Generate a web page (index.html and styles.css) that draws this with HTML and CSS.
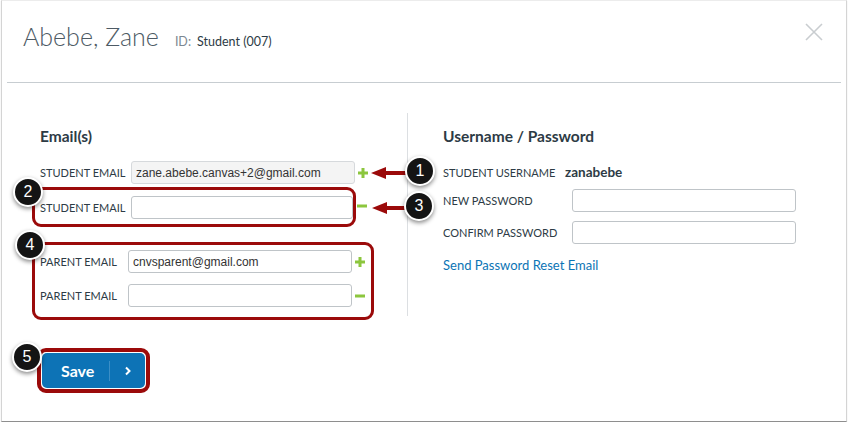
FILE: index.html
```html
<!DOCTYPE html>
<html lang="en">
<head>
    <meta charset="UTF-8">
    <title>Abebe, Zane - Edit Student</title>
    <link rel="stylesheet" href="styles.css">
</head>
<body>
    <div class="dialog">
        <div class="dialog-header">
            <div class="title-group">
                <h1 class="title">Abebe, Zane</h1>
                <span class="id-label">ID:</span>
                <span class="id-value">Student (007)</span>
            </div>
            <svg class="close" width="18" height="18" viewBox="0 0 18 18">
                <path d="M1 1 L17 17 M17 1 L1 17" stroke="#c9cdd0" stroke-width="1.6" fill="none"/>
            </svg>
        </div>

        <div class="dialog-body">
            <div class="col col-left">
                <h2 class="section-title">Email(s)</h2>

                <div class="field-row first-row">
                    <label class="field-label">STUDENT EMAIL</label>
                    <input class="text-input readonly" type="text" value="zane.abebe.canvas+2@gmail.com" readonly>
                    <svg class="icon" width="10" height="10" viewBox="0 0 10 10"><path d="M3.5 0h3v3.5H10v3H6.5V10h-3V6.5H0v-3h3.5z" fill="#8cc63e"/></svg>
                </div>

                <div class="field-row">
                    <div class="mark-box student-box">
                        <label class="field-label">STUDENT EMAIL</label>
                        <input class="text-input wide" type="text">
                    </div>
                    <svg class="icon minus" width="10" height="10" viewBox="0 0 10 10"><rect x="0" y="3.5" width="10" height="3" fill="#8cc63e"/></svg>
                </div>

                <div class="mark-box parent-box">
                    <div class="field-row">
                        <label class="field-label short">PARENT EMAIL</label>
                        <input class="text-input" type="text" value="cnvsparent@gmail.com">
                        <svg class="icon" width="10" height="10" viewBox="0 0 10 10"><path d="M3.5 0h3v3.5H10v3H6.5V10h-3V6.5H0v-3h3.5z" fill="#8cc63e"/></svg>
                    </div>
                    <div class="field-row">
                        <label class="field-label short">PARENT EMAIL</label>
                        <input class="text-input" type="text">
                        <svg class="icon" width="10" height="10" viewBox="0 0 10 10"><rect x="0" y="3.5" width="10" height="3" fill="#8cc63e"/></svg>
                    </div>
                </div>
            </div>

            <div class="col col-right">
                <h2 class="section-title">Username / Password</h2>
                <div class="field-row username-row">
                    <span class="field-label user-label">STUDENT USERNAME</span>
                    <span class="username">zanabebe</span>
                </div>
                <div class="field-row pass-row">
                    <label class="field-label pass-label">NEW PASSWORD</label>
                    <input class="text-input" type="password">
                </div>
                <div class="field-row pass-row confirm-row">
                    <label class="field-label pass-label">CONFIRM PASSWORD</label>
                    <input class="text-input" type="password">
                </div>
                <a href="#" class="reset-link">Send Password Reset Email</a>
            </div>
        </div>

        <div class="dialog-footer">
            <div class="mark-box save-box">
                <button class="save-button">
                    <span class="save-text">Save</span>
                    <span class="save-divider"></span>
                    <svg width="8" height="10" viewBox="0 0 8 10"><path d="M2 1.5 L5.5 5 L2 8.5" stroke="#fff" stroke-width="2" fill="none"/></svg>
                </button>
            </div>
        </div>

        <!-- callouts -->
        <svg class="arrow arrow-1" width="37" height="14" viewBox="0 0 37 14"><path d="M0 7 L15 1 L15 5 L37 5 L37 9 L15 9 L15 13 Z" fill="#9b0a0a"/></svg>
        <svg class="arrow arrow-3" width="37" height="14" viewBox="0 0 37 14"><path d="M0 7 L15 1 L15 5 L37 5 L37 9 L15 9 L15 13 Z" fill="#9b0a0a"/></svg>
        <span class="callout c1">1</span>
        <span class="callout c2">2</span>
        <span class="callout c3">3</span>
        <span class="callout c4">4</span>
        <span class="callout c5">5</span>
    </div>
</body>
</html>
```

FILE: styles.css
```css
body {
    margin: 0;
    background: #fff;
    font-family: Lato, "Open Sans", Arial, sans-serif;
    color: #2d3b45;
}
.dialog {
    position: relative;
    width: 844px;
    height: 420px;
    margin-left: 1px;
    border: 1px solid #d4d4d4;
    border-top-color: #ececec;
    border-bottom-color: #8e8e8e;
    box-shadow: 0 1px 1px rgba(0,0,0,0.15);
}
.dialog-header {
    height: 81px;
    margin: 0 5px;
    border-bottom: 1px solid #c7cdd1;
    display: flex;
    justify-content: space-between;
    align-items: flex-start;
}
.title-group {
    display: flex;
    align-items: baseline;
    padding: 20px 0 0 16px;
}
.title {
    margin: 0;
    font-size: 25px;
    line-height: 30px;
    font-weight: 300;
    color: #4d5a64;
}
.id-label {
    margin-left: 16px;
    font-size: 12.5px;
    color: #7b8791;
}
.id-value {
    margin-left: 6px;
    font-size: 12.5px;
    color: #2d3b45;
}
.close {
    margin: 22px 18px 0 0;
}
.dialog-body {
    display: flex;
    padding-top: 30px;
}
.col-left {
    width: 367px;
    padding-left: 38px;
}
.col-right {
    height: 203px;
    padding-left: 35px;
    border-left: 1px solid #dcdfe2;
}
.section-title {
    margin: 13px 0 0;
    font-size: 15.5px;
    line-height: 20px;
    font-weight: 700;
}
.field-row {
    display: flex;
    align-items: center;
}
.first-row {
    margin-top: 15px;
}
.field-label {
    width: 91px;
    flex-shrink: 0;
    font-size: 11px;
    line-height: 23px;
}
.field-label.short {
    width: 88px;
}
.text-input {
    box-sizing: border-box;
    width: 224px;
    height: 23px;
    margin: 0;
    padding: 0 4px;
    border: 1px solid #bfc4c8;
    border-radius: 3px;
    background: #fff;
    font-family: "Liberation Sans", Arial, sans-serif;
    font-size: 12px;
    color: #333;
}
.text-input.readonly {
    background: #f4f4f4;
    border-color: #d6d9dc;
}
.text-input.wide {
    width: 222px;
}
.icon {
    margin-left: 3px;
}
.icon.minus {
    margin-left: 1px;
}
.mark-box {
    border: 3px solid #9b0a0a;
    border-radius: 9px;
}
.student-box {
    display: flex;
    align-items: center;
    margin: 3px 0 0 -8px;
    padding: 6px 0 5px 5px;
}
.parent-box {
    width: 331px;
    margin: 15px 0 0 -8px;
    padding: 5px 0 10px 5px;
}
.parent-box .field-row + .field-row {
    margin-top: 11px;
}
.username-row {
    margin-top: 15px;
}
.user-label {
    width: 122px;
}
.username {
    font-size: 13.5px;
    font-weight: 700;
    line-height: 23px;
}
.pass-row {
    margin-top: 5px;
}
.confirm-row {
    margin-top: 9px;
}
.pass-label {
    width: 129px;
}
.reset-link {
    display: block;
    margin-top: 11px;
    font-size: 13px;
    line-height: 20px;
    color: #0b74b5;
    text-decoration: none;
}
.dialog-footer {
    padding: 28px 0 0 35px;
}
.save-box {
    display: inline-block;
    border-width: 4px;
    padding: 1px;
}
.save-button {
    display: flex;
    align-items: center;
    width: 103px;
    height: 35px;
    padding: 0 0 0 19px;
    border: none;
    border-radius: 5px;
    background: #0d73b6;
    color: #fff;
    font-family: Lato, Arial, sans-serif;
    font-size: 16px;
    font-weight: 700;
}
.save-divider {
    width: 1px;
    height: 20px;
    margin: 0 14px 0 15px;
    background: #3b8ec6;
}
.arrow {
    position: absolute;
}
.arrow-1 {
    left: 369px;
    top: 165px;
}
.arrow-3 {
    left: 370px;
    top: 200px;
}
.callout {
    position: absolute;
    width: 26px;
    height: 26px;
    border: 2px solid #fff;
    border-radius: 50%;
    background: #141414;
    box-shadow: 0 2px 4px rgba(0,0,0,0.45);
    color: #fff;
    font-family: "Liberation Sans", Arial, sans-serif;
    font-size: 16px;
    line-height: 26px;
    text-align: center;
}
.c1 { left: 403px; top: 155px; }
.c2 { left: 11px; top: 176px; }
.c3 { left: 402px; top: 190px; }
.c4 { left: 13px; top: 229px; }
.c5 { left: 10px; top: 341px; }
```
